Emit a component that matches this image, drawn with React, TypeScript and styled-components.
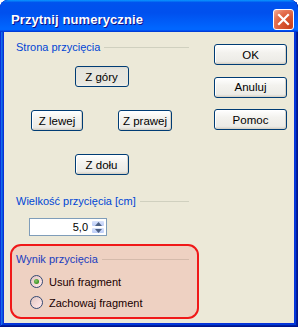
import React, { useState } from 'react';
import styled, { createGlobalStyle, css } from 'styled-components';

const GlobalStyle = createGlobalStyle`
  html, body {
    margin: 0;
    padding: 0;
    background: #ffffff;
  }
  body {
    font-family: "Liberation Sans", Arial, sans-serif;
    font-size: 11px;
  }
`;

export default function App() {
  const [side, setSide] = useState('top');
  const [result, setResult] = useState<'remove' | 'keep'>('remove');

  return (
    <>
      <GlobalStyle />
      <Window>
        <TitleBar>
          <Title>Przytnij numerycznie</Title>
          <CloseButton aria-label="Zamknij">
            <svg width="13" height="13" viewBox="0 0 13 13">
              <path
                d="M2 2 L11 11 M11 2 L2 11"
                stroke="#ffffff"
                strokeWidth="2.2"
                strokeLinecap="square"
              />
            </svg>
          </CloseButton>
        </TitleBar>

        <Body>
          <LeftColumn>
            <Group>
              <GroupHeader>
                <GroupLabel>Strona przycięcia</GroupLabel>
                <GroupLine />
              </GroupHeader>
              <SidePad>
                <XpButton $w={54} $center $pressed={side === 'top'} onClick={() => setSide('top')}>
                  Z góry
                </XpButton>
                <XpButton $w={52} $pressed={side === 'left'} onClick={() => setSide('left')}>
                  Z lewej
                </XpButton>
                <XpButton $w={54} $col={3} $pressed={side === 'right'} onClick={() => setSide('right')}>
                  Z prawej
                </XpButton>
                <XpButton $w={54} $center $pressed={side === 'bottom'} onClick={() => setSide('bottom')}>
                  Z dołu
                </XpButton>
              </SidePad>
            </Group>

            <Group $top={20}>
              <GroupHeader>
                <GroupLabel>Wielkość przycięcia [cm]</GroupLabel>
                <GroupLine />
              </GroupHeader>
              <SpinBox>
                <SpinValue>5,0</SpinValue>
                <SpinButtons>
                  <SpinHalf>
                    <svg width="7" height="4" viewBox="0 0 7 4">
                      <path d="M0 4 L3.5 0 L7 4 Z" fill="#4d6185" />
                    </svg>
                  </SpinHalf>
                  <SpinHalf>
                    <svg width="7" height="4" viewBox="0 0 7 4">
                      <path d="M0 0 L3.5 4 L7 0 Z" fill="#4d6185" />
                    </svg>
                  </SpinHalf>
                </SpinButtons>
              </SpinBox>
            </Group>

            <Highlight>
              <GroupHeader>
                <GroupLabel>Wynik przycięcia</GroupLabel>
                <GroupLine />
              </GroupHeader>
              <RadioList>
                <RadioRow onClick={() => setResult('remove')}>
                  <RadioDot $checked={result === 'remove'} />
                  Usuń fragment
                </RadioRow>
                <RadioRow onClick={() => setResult('keep')}>
                  <RadioDot $checked={result === 'keep'} />
                  Zachowaj fragment
                </RadioRow>
              </RadioList>
            </Highlight>
          </LeftColumn>

          <RightColumn>
            <XpButton $w={73}>OK</XpButton>
            <XpButton $w={73}>Anuluj</XpButton>
            <XpButton $w={73}>Pomoc</XpButton>
          </RightColumn>
        </Body>
      </Window>
    </>
  );
}

const Window = styled.div`
  width: 298px;
  height: 327px;
  display: flex;
  flex-direction: column;
  box-sizing: border-box;
  background: #0831d9;
  border-radius: 8px 8px 0 0;
  box-shadow: inset -1px -1px #00138c, inset 1px 1px #0831d9,
    inset -2px -2px #001ea0, inset 2px 2px #166aee,
    inset -3px -3px #003bda, inset 3px 3px #0855dd;
  overflow: hidden;
`;

const TitleBar = styled.div`
  height: 32px;
  box-sizing: border-box;
  display: flex;
  align-items: center;
  justify-content: space-between;
  padding: 6px 4px 0 11px;
  border-radius: 8px 8px 0 0;
  background: linear-gradient(
    180deg,
    #0997ff,
    #0053ee 8%,
    #0050ee 40%,
    #0066ff 88%,
    #0066ff 93%,
    #005bff 95%,
    #003dd7 96%,
    #003dd7
  );
`;

const Title = styled.span`
  color: #ffffff;
  font-family: "Liberation Sans", Arial, sans-serif;
  font-weight: bold;
  font-size: 13px;
  letter-spacing: 0.1px;
  text-shadow: 1px 1px #0f1089;
`;

const CloseButton = styled.button`
  width: 21px;
  height: 21px;
  padding: 0;
  display: flex;
  align-items: center;
  justify-content: center;
  border: 1px solid #ffffff;
  border-radius: 3px;
  background: radial-gradient(
    circle at 85% 85%,
    #c8411c 0%,
    #dc5a36 45%,
    #e57556 70%,
    #f3b39e 100%
  );
  cursor: pointer;
`;

const Body = styled.div`
  flex: 1;
  margin: 0 4px 4px;
  display: flex;
  background: #ece9d8;
  color: #000000;
`;

const LeftColumn = styled.div`
  width: 189px;
  margin-left: 6px;
  padding-top: 9px;
  display: flex;
  flex-direction: column;
`;

const Group = styled.div<{ $top?: number }>`
  padding: 0 10px 0 6px;
  margin-top: ${({ $top }) => $top ?? 0}px;
`;

const GroupHeader = styled.div`
  height: 13px;
  display: flex;
  align-items: center;
  gap: 4px;
`;

const GroupLabel = styled.span`
  color: #0046d5;
  font-size: 11px;
  line-height: 13px;
  white-space: nowrap;
`;

const GroupLine = styled.div`
  flex: 1;
  height: 1px;
  background: #d0d0bf;
`;

const SidePad = styled.div`
  display: grid;
  grid-template-columns: 52px 1fr 54px;
  grid-template-rows: repeat(3, 21px);
  row-gap: 23px;
  width: 141px;
  margin: 12px 0 0 15px;
`;

const XpButton = styled.button<{ $w: number; $center?: boolean; $col?: number; $pressed?: boolean }>`
  width: ${({ $w }) => $w}px;
  height: 21px;
  padding: 0;
  box-sizing: border-box;
  font-family: "Liberation Sans", Arial, sans-serif;
  font-size: 11.5px;
  font-weight: 400;
  color: #000000;
  border: 1px solid #003c74;
  border-radius: 3px;
  background: linear-gradient(180deg, #ffffff, #f3f2ee 40%, #ecebe6 86%, #d6d0c5);
  box-shadow: inset -1px -1px #d8d3c8, inset 1px 1px #ffffff;
  cursor: pointer;
  ${({ $center }) =>
    $center &&
    css`
      grid-column: 1 / -1;
      justify-self: center;
    `}
  ${({ $col }) =>
    $col &&
    css`
      grid-column: ${$col};
    `}
  ${({ $pressed }) =>
    $pressed &&
    css`
      background: linear-gradient(180deg, #dcdbd3, #e6e5de 15%, #e8e7e0 85%, #f1f0ea);
      box-shadow: none;
    `}
`;

const SpinBox = styled.div`
  width: 78px;
  height: 18px;
  box-sizing: border-box;
  margin: 10px 0 0 13px;
  display: flex;
  align-items: stretch;
  border: 1px solid #7f9db9;
  background: #ffffff;
`;

const SpinValue = styled.span`
  flex: 1;
  text-align: right;
  padding-right: 3px;
  font-size: 11px;
  line-height: 16px;
`;

const SpinButtons = styled.div`
  width: 15px;
  display: flex;
  flex-direction: column;
  padding: 1px 1px 1px 0;
  box-sizing: border-box;
`;

const SpinHalf = styled.div`
  flex: 1;
  display: flex;
  align-items: center;
  justify-content: center;
  border: 1px solid #ffffff;
  border-radius: 2px;
  background: linear-gradient(180deg, #d9e3fb, #bccdf8);
`;

const Highlight = styled.div`
  position: relative;
  margin-top: 8px;
  height: 75px;
  box-sizing: border-box;
  padding: 7px 8px 0 4px;
  border: 2px solid #f01818;
  border-radius: 11px;

  &::after {
    content: '';
    position: absolute;
    inset: 0;
    border-radius: 9px;
    background: rgba(255, 0, 0, 0.1);
    pointer-events: none;
  }
`;

const RadioList = styled.div`
  margin-top: 5px;
  display: flex;
  flex-direction: column;
`;

const RadioRow = styled.label`
  height: 21px;
  display: flex;
  align-items: center;
  gap: 6px;
  padding-left: 14px;
  font-size: 11px;
  cursor: pointer;
`;

const RadioDot = styled.span<{ $checked: boolean }>`
  position: relative;
  width: 13px;
  height: 13px;
  box-sizing: border-box;
  border-radius: 50%;
  border: 1px solid #1c5180;
  background: linear-gradient(135deg, #dcdcd7, #ffffff 85%);
  ${({ $checked }) =>
    $checked &&
    css`
      &::before {
        content: '';
        position: absolute;
        left: 3px;
        top: 3px;
        width: 5px;
        height: 5px;
        border-radius: 50%;
        background: radial-gradient(circle at 40% 40%, #7be07b, #21a121 70%);
      }
    `}
`;

const RightColumn = styled.div`
  margin-left: 15px;
  padding-top: 12px;
  display: flex;
  flex-direction: column;
  gap: 11.5px;
`;
